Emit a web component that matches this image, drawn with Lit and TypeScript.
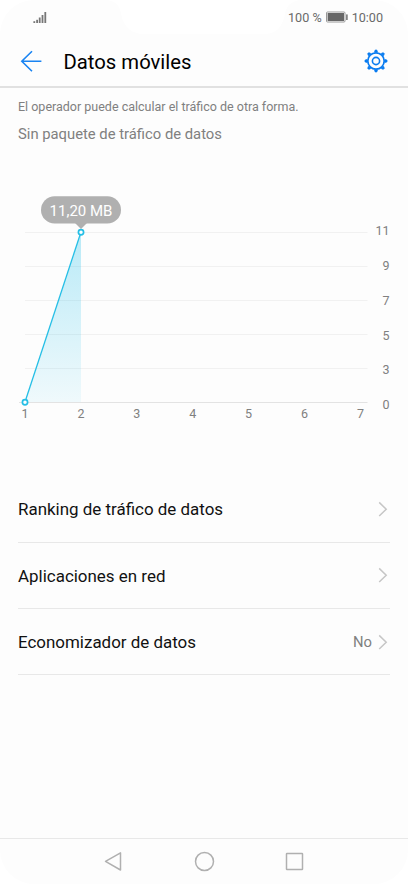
import { LitElement, html, svg, css } from "lit";
import { customElement, property } from "lit/decorators.js";

@customElement("status-bar")
class StatusBar extends LitElement {
  static styles = css`
    :host { display: flex; height: 36px; position: relative; color: #6a6a6a; }
    .notch { position: absolute; left: 0; top: 0; display: block; }
    .row { position: relative; display: flex; align-items: center; width: 100%; height: 34px; padding: 0 25px 0 33px; box-sizing: border-box; font-size: 12.6px; }
    .signal { flex: none; display: block; }
    .spacer { flex: 1; }
    .battery { margin: 0 4px 0 4px; display: block; }
  `;
  render() {
    return html`
      <svg class="notch" width="408" height="36" viewBox="0 0 408 36">
        <path d="M108 0C118 2 120 8 121 14C124 28 132 34 144 34H264C276 34 282 28 285 14C286 8 289 2 299 0Z" fill="#fff" />
      </svg>
      <div class="row">
        <svg class="signal" width="14" height="13" viewBox="0 0 14 13" fill="#777">
          <rect x="0.4" y="10.2" width="1.8" height="1.8" />
          <rect x="3.2" y="8.8" width="1.8" height="3.2" />
          <rect x="5.8" y="6.5" width="1.8" height="5.5" />
          <rect x="8.6" y="4" width="1.8" height="8" />
          <rect x="11.4" y="1" width="1.8" height="11" />
        </svg>
        <span class="spacer"></span>
        <span>100 %</span>
        <svg class="battery" width="22" height="12" viewBox="0 0 22 12">
          <rect x="0.5" y="1" width="18.5" height="10" rx="1" fill="#fff" stroke="#999" />
          <rect x="1.6" y="2" width="16.4" height="8" fill="#666" />
          <rect x="20.2" y="3.4" width="1.4" height="5.6" fill="#666" />
        </svg>
        <span>10:00</span>
      </div>
    `;
  }
}

@customElement("app-header")
class AppHeader extends LitElement {
  static styles = css`
    :host { display: flex; align-items: center; height: 50px; padding: 0 20px 0 20px; border-bottom: 2px solid #e1e1e1; }
    .title { flex: 1; margin: 0 0 0 20.5px; font-size: 20.3px; font-weight: 400; line-height: 24px; color: #000; padding-top: 2px; }
    svg { display: block; flex: none; }
  `;
  render() {
    const teeth = [0, 45, 90, 135, 180, 225, 270, 315];
    return html`
      <svg width="23" height="24" viewBox="0 0 23 24" fill="none" stroke="#1a84f2" stroke-width="1.6">
        <path d="M21.4 12.2H1.8M12 2.2L1.8 12.2L12 22.2" />
      </svg>
      <h1 class="title">Datos móviles</h1>
      <svg width="24" height="24" viewBox="-12 -12 24 24" fill="none" stroke="#0a7cf0">
        <circle r="8.2" stroke-width="1.7" />
        <circle r="3.6" stroke-width="1.6" />
        ${teeth.map((a) => svg`<path transform="rotate(${a})" d="M-1.7 -8.8L-0.9 -11.1H0.9L1.7 -8.8Z" fill="#0a7cf0" stroke-width="0.5" stroke-linejoin="round" />`)}
      </svg>
    `;
  }
}

@customElement("usage-chart")
class UsageChart extends LitElement {
  static styles = css`
    :host { display: block; height: 240px; }
    svg { display: block; }
    .grid { stroke: #f1f1f1; stroke-width: 1; }
    .axis { stroke: #e3e3e3; stroke-width: 1; }
    .label { font-size: 12.5px; fill: #808080; }
    .tip { font-size: 15px; fill: #fff; }
    .line { stroke: #26bfe6; stroke-width: 1.3; fill: none; }
    .dot { stroke: #26bfe6; stroke-width: 1.7; fill: #fff; }
  `;
  render() {
    const days = [1, 2, 3, 4, 5, 6, 7];
    const levels = [11, 9, 7, 5, 3, 0];
    return html`
      <svg width="408" height="240" viewBox="0 190 408 240">
        <defs>
          <linearGradient id="fill" x1="0" y1="0" x2="0" y2="1">
            <stop offset="0" stop-color="#1abde9" stop-opacity="0.3" />
            <stop offset="1" stop-color="#1abde9" stop-opacity="0.06" />
          </linearGradient>
        </defs>
        ${levels.map((v, i) => svg`
          <line class="${v ? "grid" : "axis"}" x1="${v ? 25 : 19}" x2="367.5" y1="${232.5 + i * 34}" y2="${232.5 + i * 34}" />
          <text class="label" x="389.5" y="${235.3 + i * 34.75}" text-anchor="end">${v}</text>
        `)}
        <path d="M25 402L81 232V402Z" fill="url(#fill)" />
        ${days.map((d, i) => svg`<text class="label" x="${25 + i * 55.9}" y="418.3" text-anchor="middle">${d}</text>`)}
        <path class="line" d="M25 402L81 232" />
        <circle class="dot" cx="25" cy="402.3" r="2.6" />
        <rect x="41" y="196.3" width="80" height="27.3" rx="13.65" fill="#b0b0b0" />
        <path d="M75 223H87L81 229Z" fill="#b0b0b0" />
        <circle class="dot" cx="81" cy="232.3" r="2.6" />
        <text class="tip" x="81" y="215.9" text-anchor="middle">11,20 MB</text>
      </svg>
    `;
  }
}

@customElement("menu-row")
class MenuRow extends LitElement {
  @property() label = "";
  @property() value = "";
  static styles = css`
    :host { display: flex; align-items: center; height: 66.4px; box-sizing: border-box; border-bottom: 1px solid #e8e8e8; padding-right: 2px; }
    .label { flex: 1; font-size: 16.95px; line-height: 20px; color: #111; padding-top: 1px; }
    .value { font-size: 14.8px; color: #808080; margin-right: 6px; padding-top: 1px; }
    svg { display: block; }
  `;
  render() {
    return html`
      <span class="label">${this.label}</span>
      <span class="value">${this.value}</span>
      <svg width="10" height="16" viewBox="0 0 10 16" fill="none" stroke="#c6c6c6" stroke-width="1.5">
        <path d="M1.2 1.4L8.2 8.2L1.2 15" />
      </svg>
    `;
  }
}

@customElement("nav-bar")
class NavBar extends LitElement {
  static styles = css`
    :host { display: flex; justify-content: center; align-items: center; gap: 69.5px; height: 44px; padding: 0 0 1px 0; border-top: 1px solid #e8e8e8; }
    svg { display: block; }
  `;
  render() {
    return html`
      <svg width="21" height="21" viewBox="0 0 21 21" fill="none" stroke="#b0b0b0" stroke-width="1.5" stroke-linejoin="round">
        <path d="M17.5 1.8V19L2.5 10.4Z" />
      </svg>
      <svg width="21" height="21" viewBox="0 0 21 21" fill="none" stroke="#b0b0b0" stroke-width="1.5">
        <circle cx="10.5" cy="10.5" r="9" />
      </svg>
      <svg width="21" height="21" viewBox="0 0 21 21" fill="none" stroke="#b0b0b0" stroke-width="1.5">
        <rect x="2.5" y="2.5" width="16" height="16" rx="0.5" />
      </svg>
    `;
  }
}

@customElement("app-root")
class AppRoot extends LitElement {
  static styles = css`
    :host { display: block; height: 884px; overflow: hidden; background: #fff; font-family: Roboto, "Liberation Sans", sans-serif; }
    .screen { display: flex; flex-direction: column; width: 408px; height: 884px; background: #fdfdfd; border-radius: 34px; overflow: hidden; }
    .note { margin: 11px 18px 0; font-size: 12.5px; line-height: 16px; color: #808080; }
    .plan { margin: 9px 18px 0; font-size: 14.8px; line-height: 20px; color: #808080; }
    .chart { margin-top: 46px; }
    .list { display: flex; flex-direction: column; margin: 46.2px 18px 0; }
    .spacer { flex: 1; }
  `;
  render() {
    return html`
      <main class="screen">
        <status-bar></status-bar>
        <app-header></app-header>
        <p class="note">El operador puede calcular el tráfico de otra forma.</p>
        <p class="plan">Sin paquete de tráfico de datos</p>
        <usage-chart class="chart"></usage-chart>
        <section class="list">
          <menu-row label="Ranking de tráfico de datos"></menu-row>
          <menu-row label="Aplicaciones en red"></menu-row>
          <menu-row label="Economizador de datos" value="No"></menu-row>
        </section>
        <div class="spacer"></div>
        <nav-bar></nav-bar>
      </main>
    `;
  }
}
